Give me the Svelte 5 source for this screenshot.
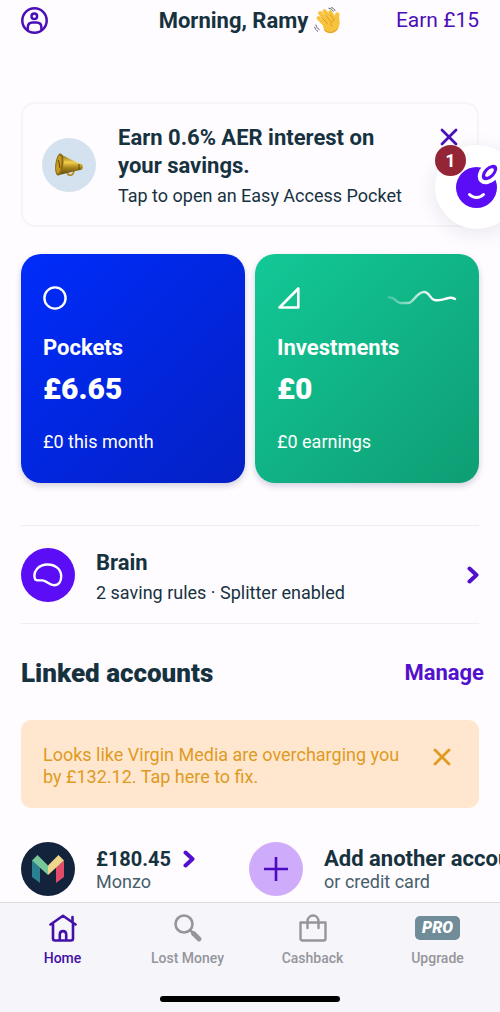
<script>
	let showPromo = $state(true);
	let showWarning = $state(true);
	let active = $state('Home');

	const cards = [
		{ name: 'Pockets', amount: '£6.65', note: '£0 this month', kind: 'pockets' },
		{ name: 'Investments', amount: '£0', note: '£0 earnings', kind: 'investments' }
	];
	const tabs = ['Home', 'Lost Money', 'Cashback', 'Upgrade'];
</script>

{#snippet cross()}
	<svg width="18" height="18" viewBox="0 0 18 18" fill="none" stroke="currentColor" stroke-width="2.8" stroke-linecap="round">
		<path d="M2 2l14 14M16 2L2 16" />
	</svg>
{/snippet}

{#snippet chevron()}
	<svg class="chevron" width="12" height="18" viewBox="0 0 12 18" fill="none" stroke="currentColor" stroke-width="4" stroke-linecap="round" stroke-linejoin="round">
		<path d="M2.5 2.5L9.5 9l-7 6.5" />
	</svg>
{/snippet}

<div class="page">
	<header>
		<button class="profile" aria-label="Profile">
			<svg width="27" height="27" viewBox="0 0 27 27" fill="none" stroke="currentColor" stroke-width="2.5">
				<circle cx="13.5" cy="13.5" r="12.2" />
				<circle cx="13.3" cy="9.3" r="2.8" />
				<path d="M6.8 23v-2.600c0-3 1.800-4.800 4.800-4.800h4c3 0 4.800 1.800 4.800 4.800V23" />
			</svg>
		</button>
		<h1>
			Morning, Ramy
			<svg width="27" height="27" viewBox="0 0 27 27" role="img" aria-label="waving hand">
				<g fill="none" stroke="#f8c33c" stroke-linecap="round">
					<path stroke-width="4.2" d="M6.2 6.2l9 10.5M10.5 4.2l8 10" />
					<path stroke-width="4" d="M4.5 11l8.5 9M16.3 5.2l5 8" />
					<path stroke-width="4.4" d="M23.3 7.5c-1.2 2.5.5 5.5 0 9" />
				</g>
				<path fill="#f8c33c" d="M7.5 13L19 10l6.3 4.5c.7 5-1.8 9.3-5.8 11.1-3.6 1.6-6.8.3-9.3-2.3z" />
				<path fill="none" stroke="#d8952a" stroke-width=".9" stroke-linecap="round" d="M7.6 10.2l5.8 6.4M11.8 8.5l5 6M16 7.5l4.4 5.6c-3.1 1-4.2 3.4-2.6 6M10.5 23c3.8 3.7 9.5 3.3 12.8-1.2" />
				<path fill="none" stroke="#5d6268" stroke-linecap="round" d="M14.8 1.2c2 .3 3.4 1.4 4.4 3M17.5.6c1.8.6 2.8 1.6 3.6 3M2 18c.3 2 1.5 3.6 3.2 4.6M.7 20.2c.4 1.9 1.5 3.1 3 4.1" />
			</svg>
		</h1>
		<a class="earn" href="#earn">Earn £15</a>
	</header>

	<main>
		<div class="top">
			{#if showPromo}
				<section class="promo">
					<div class="round horn">
						<svg width="30" height="26" viewBox="0 0 30 26">
							<defs>
								<linearGradient id="brass" x1="0" y1="0" x2="0" y2="1">
									<stop offset="0" stop-color="#7d6414" />
									<stop offset=".4" stop-color="#f1cf4c" />
									<stop offset=".65" stop-color="#a8851b" />
									<stop offset="1" stop-color="#59450b" />
								</linearGradient>
							</defs>
							<path fill="none" stroke="#b28b22" stroke-width="1.6" d="M13 20c1 4.500 6 4.500 7-1" />
							<path fill="url(#brass)" d="M6 2l19 9.500c2.500 0 3.800 1 3.800 3.400 0 2.200-1.300 3.400-3.800 3.300L5 23z" />
							<ellipse cx="5.3" cy="12.5" rx="4" ry="11.2" fill="#8e6d14" transform="rotate(7 5.3 12.5)" />
							<ellipse cx="4.8" cy="12.5" rx="2.5" ry="9" fill="#c99a20" transform="rotate(7 4.8 12.5)" />
							<path stroke="#5d470c" stroke-width="1" d="M4.5 8l1.5 8M25 12v6" />
						</svg>
					</div>
					<div class="promo-text">
						<h2>Earn 0.6% AER interest on your savings.</h2>
						<p>Tap to open an Easy Access Pocket</p>
					</div>
					<button class="close" aria-label="Dismiss offer" onclick={() => (showPromo = false)}>
						{@render cross()}
					</button>
				</section>
			{/if}
			<button class="chat" aria-label="Open chat, 1 unread message">
				<svg width="46" height="46" viewBox="0 0 46 46">
					<circle cx="22.5" cy="23.5" r="20.5" fill="#5b0df5" />
					<ellipse cx="35.5" cy="8.5" rx="7.5" ry="11.5" fill="#5b0df5" stroke="#fff" stroke-width="4" transform="rotate(45 35.5 8.5)" />
					<ellipse cx="35.5" cy="8.5" rx="2.6" ry="5.5" fill="#fff" transform="rotate(45 35.5 8.5)" />
					<path fill="none" stroke="#fff" stroke-width="3" stroke-linecap="round" d="M15.5 30.500c4 4 10 4 14 0" />
				</svg>
				<span class="badge">1</span>
			</button>
		</div>

		<div class="cards">
			{#each cards as card}
				<a class="card {card.kind}" href="#{card.kind}">
					<div class="card-icons">
						{#if card.kind === 'pockets'}
							<svg width="24" height="24" viewBox="0 0 24 24" fill="none" stroke="#fff" stroke-width="2.4">
								<circle cx="12" cy="12" r="10.6" />
							</svg>
						{:else}
							<svg width="24" height="24" viewBox="0 0 24 24" fill="none" stroke="#fff" stroke-width="2.6" stroke-linejoin="round">
								<path d="M21.3 2.5v19H2.5z" />
							</svg>
							<svg width="70" height="24" viewBox="0 0 70 24" fill="none">
								<defs>
									<linearGradient id="trend" x1="0" x2="1">
										<stop offset="0" stop-color="#fff" stop-opacity=".2" />
										<stop offset=".7" stop-color="#fff" />
									</linearGradient>
								</defs>
								<path stroke="url(#trend)" stroke-width="2.4" stroke-linecap="round" stroke-linejoin="round" d="M1.5 11.500c7-1 7 5.500 12 5.500h8c5 0 8-11 15.500-11 6 0 6 7.500 10.500 8 6 .8 8-.2 12-1.500 3-1 6-1 8.500.5" />
							</svg>
						{/if}
					</div>
					<h2>{card.name}</h2>
					<strong>{card.amount}</strong>
					<p>{card.note}</p>
				</a>
			{/each}
		</div>

		<a class="brain" href="#brain">
			<div class="round brain-icon">
				<svg width="30" height="24" viewBox="0 0 30 24" fill="none" stroke="#fff" stroke-width="2.4" stroke-linejoin="round">
					<path d="M2 16C-.5 8 6 1.500 14.500 1.500 22 1.500 28.200 6 28.200 13.500c0 5-2.500 8.700-7 8.700-5 0-7-4.200-11.700-4.800C6.500 17 3 18.300 2 16z" />
				</svg>
			</div>
			<div class="brain-text">
				<h3>Brain</h3>
				<p>2 saving rules · Splitter enabled</p>
			</div>
			{@render chevron()}
		</a>

		<div class="linked">
			<h2>Linked accounts</h2>
			<a href="#manage">Manage</a>
		</div>

		{#if showWarning}
			<div class="warning">
				<a href="#fix">Looks like Virgin Media are overcharging you by £132.12. Tap here to fix.</a>
				<button class="close" aria-label="Dismiss warning" onclick={() => (showWarning = false)}>
					{@render cross()}
				</button>
			</div>
		{/if}

		<div class="accounts">
			<a class="account" href="#monzo">
				<div class="round monzo">
					<svg width="32" height="28" viewBox="0 0 32 28">
						<path fill="#2b8092" d="M0 5.500l8 7V28l-8-6z" />
						<path fill="#76c79a" d="M5.500 0L16 10.500V20L0 5.500z" />
						<path fill="#e34b6b" d="M32 5.500l-8 7V28l8-6z" />
						<path fill="#efd58b" d="M26.500 0L16 10.500V20L32 5.500z" />
					</svg>
				</div>
				<div>
					<h3 class="balance">£180.45 {@render chevron()}</h3>
					<p>Monzo</p>
				</div>
			</a>
			<a class="account" href="#add">
				<div class="round add">
					<svg width="24" height="24" viewBox="0 0 24 24" stroke="#4a0bc0" stroke-width="2.6">
						<path d="M12 0v24M0 12h24" />
					</svg>
				</div>
				<div>
					<h3>Add another account</h3>
					<p>or credit card</p>
				</div>
			</a>
		</div>
	</main>

	<footer>
		<nav>
			{#each tabs as tab}
				<button class:active={active === tab} onclick={() => (active = tab)}>
					<span class="tab-icon">
						{#if tab === 'Home'}
							<svg width="28" height="28" viewBox="0 0 28 28" fill="none" stroke="currentColor" stroke-width="2.6" stroke-linecap="round" stroke-linejoin="round">
								<path d="M1.500 10.500L14 1.800l12.500 8.700M23.500 8V3M4 10v14.500c0 1.200.8 2 2 2h16c1.200 0 2-.8 2-2V10M10.800 26v-5.500c0-4.500 6.400-4.500 6.400 0V26" />
							</svg>
						{:else if tab === 'Lost Money'}
							<svg width="28" height="28" viewBox="0 0 28 28" fill="none" stroke="currentColor" stroke-linecap="round">
								<circle cx="10" cy="10" r="8.5" stroke-width="2.6" />
								<path stroke-width="2.6" d="M16.500 16.500l3 3" />
								<path stroke-width="4.8" d="M19.500 19.500l5.500 5.500" />
							</svg>
						{:else if tab === 'Cashback'}
							<svg width="28" height="28" viewBox="0 0 28 28" fill="none" stroke="currentColor" stroke-width="2.4" stroke-linecap="round" stroke-linejoin="round">
								<path d="M1.500 8.500h25v16c0 1.200-.8 2-2 2h-21c-1.200 0-2-.8-2-2zM8.500 14V7.500c0-8 11-8 11 0V14" />
							</svg>
						{:else}
							<span class="pro">PRO</span>
						{/if}
					</span>
					{tab}
				</button>
			{/each}
		</nav>
		<div class="home-bar"></div>
	</footer>
</div>

<style>
	:global(body) {
		margin: 0;
		background: #fefcff;
	}
	.page {
		display: flex;
		flex-direction: column;
		min-height: 100vh;
		overflow-x: clip;
		font-family: Roboto, 'Liberation Sans', sans-serif;
		color: #17323f;
	}
	h1,
	h2,
	h3,
	p {
		margin: 0;
	}
	a {
		color: inherit;
		text-decoration: none;
	}
	button {
		padding: 0;
		border: 0;
		background: none;
		font: inherit;
		color: inherit;
		cursor: pointer;
	}
	svg {
		display: block;
		flex-shrink: 0;
	}
	header {
		display: grid;
		grid-template-columns: 1fr auto 1fr;
		align-items: center;
		height: 40px;
		padding: 0 21px;
		color: #4b0fb8;
	}
	h1 {
		display: flex;
		align-items: center;
		gap: 6px;
		font-size: 22px;
		color: #17323f;
	}
	.profile {
		justify-self: start;
	}
	.earn {
		justify-self: end;
		font-size: 21px;
	}
	main {
		flex: 1;
		padding: 62px 21px 6px;
	}
	.top {
		position: relative;
		min-height: 125px;
	}
	.promo {
		display: flex;
		align-items: center;
		box-sizing: border-box;
		min-height: 125px;
		padding: 0 19px;
		border: 2px solid #f5f5f9;
		border-radius: 14px;
	}
	.round {
		display: flex;
		align-items: center;
		justify-content: center;
		flex-shrink: 0;
		width: 54px;
		height: 54px;
		border-radius: 50%;
	}
	.horn {
		background: #d3e2ee;
	}
	.promo-text {
		flex: 1;
		padding: 3px 20px 0 22px;
	}
	.promo h2 {
		font-size: 22px;
		line-height: 28px;
	}
	.promo p {
		margin-top: 3px;
		font-size: 18px;
		line-height: 26px;
	}
	.close {
		align-self: flex-start;
	}
	.promo .close {
		margin-top: 24px;
		color: #4b0fb8;
	}
	.chat {
		position: absolute;
		top: 43px;
		right: -40px;
		display: flex;
		align-items: center;
		justify-content: center;
		width: 84px;
		height: 84px;
		border-radius: 50%;
		background: #fff;
		box-shadow: 0 4px 20px rgba(40, 30, 80, 0.1);
	}
	.badge {
		position: absolute;
		top: 0;
		left: 0;
		width: 31px;
		border-radius: 50%;
		background: #942536;
		color: #fff;
		font-size: 18px;
		font-weight: 700;
		line-height: 31px;
	}
	.cards {
		display: grid;
		grid-template-columns: 1fr 1fr;
		gap: 10px;
		margin-top: 27px;
	}
	.card {
		padding: 32px 22px 28px;
		border-radius: 20px;
		color: #fff;
		box-shadow: 0 3px 6px rgba(30, 30, 80, 0.2);
	}
	.pockets {
		background: linear-gradient(135deg, #002cfb, #0421c4);
	}
	.investments {
		background: linear-gradient(135deg, #12c996, #0f9d74);
	}
	.card-icons {
		display: flex;
		justify-content: space-between;
	}
	.card h2 {
		margin-top: 24px;
		font-size: 22px;
		line-height: 28px;
	}
	.card strong {
		display: block;
		margin-top: 9px;
		font-size: 30px;
		font-weight: 900;
		line-height: 36px;
	}
	.card p {
		margin-top: 22px;
		font-size: 18px;
		line-height: 26px;
	}
	.brain {
		display: flex;
		align-items: center;
		gap: 21px;
		margin-top: 42px;
		height: 97px;
		border-top: 1px solid #ededf3;
		border-bottom: 1px solid #ededf3;
	}
	.brain-icon {
		background: #5b0df5;
	}
	.brain-text {
		flex: 1;
		padding-top: 5px;
	}
	h3 {
		font-size: 22px;
		line-height: 28px;
	}
	.brain p {
		margin-top: 3px;
		font-size: 18px;
		line-height: 26px;
	}
	.chevron {
		color: #5210cc;
	}
	.linked {
		display: flex;
		align-items: center;
		justify-content: space-between;
		margin: 33px -5px 0 0;
		line-height: 32px;
	}
	.linked h2 {
		font-size: 26px;
		font-weight: 900;
	}
	.linked a {
		font-size: 22px;
		font-weight: 700;
		color: #5210cc;
	}
	.warning {
		display: flex;
		justify-content: space-between;
		margin-top: 31px;
		padding: 24px 28px 20px 22px;
		border-radius: 10px;
		background: #ffe7cf;
		color: #e09a22;
		font-size: 18px;
		line-height: 22px;
	}
	.warning a {
		max-width: 360px;
	}
	.warning .close {
		margin-top: 4px;
	}
	.accounts {
		display: flex;
		gap: 54px;
		margin: 34px -21px 0 0;
		overflow: hidden;
	}
	.account {
		display: flex;
		align-items: center;
		gap: 21px;
		white-space: nowrap;
	}
	.account h3 {
		display: flex;
		align-items: center;
		line-height: 26px;
	}
	.account .balance {
		gap: 12px;
		font-size: 20px;
	}
	.account p {
		font-size: 18px;
		line-height: 20px;
		color: #46606b;
	}
	.monzo {
		background: #14233c;
	}
	.add {
		background: #cfabfb;
	}
	footer {
		position: sticky;
		bottom: 0;
		box-sizing: border-box;
		height: 111px;
		border-top: 1px solid #dcdce2;
		background: #f6f5fa;
	}
	nav {
		display: grid;
		grid-template-columns: repeat(4, 1fr);
		padding-top: 10px;
	}
	nav button {
		font-size: 14px;
		font-weight: 500;
		line-height: 18px;
		color: #95959b;
	}
	nav .active {
		color: #4310a8;
	}
	.tab-icon {
		display: flex;
		align-items: center;
		justify-content: center;
		height: 30px;
		margin-bottom: 6px;
	}
	.pro {
		width: 45px;
		border-radius: 5px;
		background: #6f8c98;
		color: #fff;
		font-size: 16px;
		font-style: italic;
		font-weight: 900;
		line-height: 24px;
	}
	.home-bar {
		width: 36%;
		height: 6px;
		margin: 29px auto 0;
		border-radius: 3px;
		background: #000;
	}
</style>
